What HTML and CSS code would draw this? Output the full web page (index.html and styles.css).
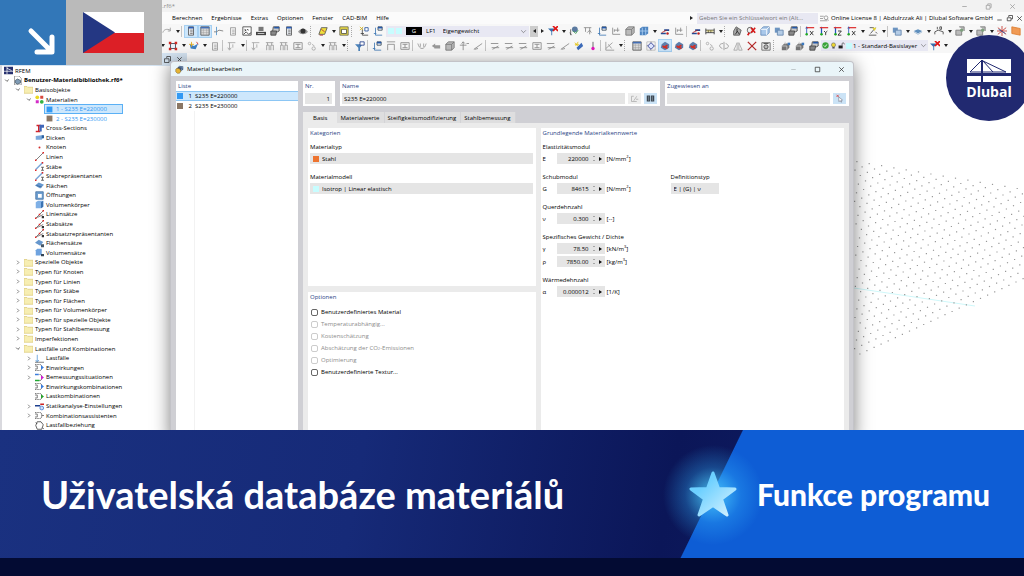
FILE: index.html
```html
<!DOCTYPE html>
<html lang="cs">
<head>
  <meta charset="UTF-8">
  <title>Uživatelská databáze materiálů | Dlubal</title>
  <meta name="viewport" content="width=device-width, initial-scale=1.0">
  <link rel="stylesheet" href="styles.css">
</head>
<body>
  <main class="app" lang="de">
    <header class="titlebar">
      <span class="file-name">Benutzer-Materialbibliothek.rf6*</span>
      <span class="window-btns">
        <button aria-label="Minimieren"><svg viewBox="0 0 12 12"><path d="M3 6h6"/></svg></button>
        <button aria-label="Verkleinern"><svg viewBox="0 0 12 12"><path d="M3 4.5h5v5H3zM5 4V2.500h4.500v5H8.500"/></svg></button>
        <button aria-label="Schließen"><svg viewBox="0 0 12 12"><path d="M3 3l6 6M9 3l-6 6"/></svg></button>
      </span>
    </header>
    <nav class="menubar">
      <button>Berechnen</button>
      <button>Ergebnisse</button>
      <button>Extras</button>
      <button>Optionen</button>
      <button>Fenster</button>
      <button>CAD-BIM</button>
      <button>Hilfe</button>
      <div class="menu-right">
        <span class="tri"></span>
        <input class="search" type="text" aria-label="Suche" placeholder="Geben Sie ein Schlüsselwort ein (Alt...">
        <svg class="find" viewBox="0 0 12 12"><path d="M0 3h5M0 6h4M0 9h10"/><circle cx="8" cy="5" r="2.500"/><path d="M10 7l2 2"/></svg>
        <span class="license">Online License 8 | Abdulrzzak Ali | Dlubal Software GmbH</span>
        <span class="mdi"><svg viewBox="0 0 12 12"><path d="M3 8h6"/></svg><svg viewBox="0 0 12 12"><path d="M3 5h5v4H3zM5 4V2h5v4.500H8"/></svg><svg viewBox="0 0 12 12"><path d="M3 3l6 6M9 3l-6 6"/></svg></span>
      </div>
    </nav>
    <div class="toolbar" id="toolbar1"></div>
    <div class="toolbar" id="toolbar2"></div>

    <div class="workspace">
      <aside class="navigator">
        <div class="nav-head"><svg viewBox="0 0 12 12"><path d="M2 5h6v5H2zM5 4V2h5v6H9"/></svg><svg viewBox="0 0 12 12"><path d="M3 3l6 6M9 3l-6 6"/></svg></div>
        <ul class="tree" id="tree"></ul>
      </aside>
      <div class="canvas">
        <svg id="grid" viewBox="854 52 170 378"></svg>
      </div>
    </div>

    <section class="dialog" role="dialog" aria-labelledby="dialogTitle">
      <div class="dialog-title">
        <svg viewBox="0 0 12 12"><path d="M2 5l4-4 5 1v4l-4 3z" fill="#3d5274"/><path d="M5 2l5 1-2 5" fill="none" stroke="#7fa2c8"/><path d="M1 6c1-2 3-2 5-1l2 3-2 3H3L1 9z" fill="#e6b435" stroke="#6b551f" stroke-width=".6"/></svg>
        <h2 id="dialogTitle">Material bearbeiten</h2>
        <span class="window-btns">
          <button class="off" aria-label="Minimieren"><svg viewBox="0 0 12 12"><path d="M3 6h6"/></svg></button>
          <button aria-label="Maximieren"><svg viewBox="0 0 12 12"><path d="M3 3h6v6H3z"/></svg></button>
          <button aria-label="Schließen"><svg viewBox="0 0 12 12"><path d="M3 3l6 6M9 3l-6 6"/></svg></button>
        </span>
      </div>
      <div class="dialog-body">
        <div class="list panel">
          <h3>Liste</h3>
          <ul>
            <li class="selected"><i class="swatch blue"></i><b>1</b><span>S235 E=220000</span></li>
            <li><i class="swatch brown"></i><b>2</b><span>S235 E=230000</span></li>
          </ul>
          <div class="list-rest"></div>
        </div>
        <div class="detail">
          <div class="top-row">
            <div class="panel nr">
              <label for="nr">Nr.</label>
              <input id="nr" class="field right" type="text" value="1">
            </div>
            <div class="panel name">
              <label for="name">Name</label>
              <div class="line">
                <input id="name" class="field" type="text" value="S235 E=220000">
                <button class="icon-btn" aria-label="Bearbeiten"><svg viewBox="0 0 12 12"><path d="M5 3H2v7h7M5 9l4-6M8 7h3" stroke="#aaa" fill="none"/></svg></button>
                <button class="icon-btn on" aria-label="Bibliothek"><svg viewBox="0 0 12 12"><path d="M1 2h4.500v8H1zM6.500 2H11v8H6.500z" fill="#3c4650"/><path d="M3.500 3v6M8.500 3v6" stroke="#8494a2"/></svg></button>
              </div>
            </div>
            <div class="panel assigned">
              <label for="assigned">Zugewiesen an</label>
              <div class="line">
                <input id="assigned" class="field" type="text">
                <button class="icon-btn on" aria-label="Auswählen"><svg viewBox="0 0 12 12"><path d="M2 1l3 3M5 1L2 4" stroke="#d33"/><path d="M5 4l5 4-2 .500 1 2-1 .500-1-2-2 1z" fill="#fff" stroke="#667" stroke-width=".7"/></svg></button>
              </div>
            </div>
          </div>
          <div class="tabs">
            <button class="active">Basis</button>
            <button>Materialwerte</button>
            <button>Steifigkeitsmodifizierung</button>
            <button>Stahlbemessung</button>
          </div>
          <div class="tab-page">
            <div class="left-col">
              <div class="panel categories">
                <h3>Kategorien</h3>
                <div class="group">
                  <label for="type">Materialtyp</label>
                  <div class="select"><i class="swatch orange"></i><select id="type"><option>Stahl</option></select></div>
                </div>
                <div class="group">
                  <label for="model">Materialmodell</label>
                  <div class="select"><i class="swatch cyan"></i><select id="model"><option>Isotrop | Linear elastisch</option></select></div>
                </div>
              </div>
              <div class="panel options">
                <h3>Optionen</h3>
                <label><input type="checkbox">Benutzerdefiniertes Material</label>
                <label class="off"><input type="checkbox" disabled>Temperaturabhängig...</label>
                <label class="off"><input type="checkbox" disabled>Kostenschätzung</label>
                <label class="off"><input type="checkbox" disabled>Abschätzung der CO<small>2</small>-Emissionen</label>
                <label class="off"><input type="checkbox" disabled>Optimierung</label>
                <label><input type="checkbox">Benutzerdefinierte Textur...</label>
              </div>
            </div>
            <div class="panel values">
              <h3>Grundlegende Materialkennwerte</h3>
              <div class="group">
                <p>Elastizitätsmodul</p>
                <div class="value"><label for="e">E</label><input id="e" type="text" value="220000"><i class="spin"></i><i class="more"></i><span>[N/mm<sup>2</sup>]</span></div>
              </div>
              <div class="pair">
                <div class="group">
                  <p>Schubmodul</p>
                  <div class="value"><label for="g">G</label><input id="g" type="text" value="84615"><i class="spin"></i><i class="more"></i><span>[N/mm<sup>2</sup>]</span></div>
                </div>
                <div class="group">
                  <label for="def">Definitionstyp</label>
                  <div class="select def"><select id="def"><option>E | (G) | ν</option></select></div>
                </div>
              </div>
              <div class="group">
                <p>Querdehnzahl</p>
                <div class="value"><label for="nu">ν</label><input id="nu" type="text" value="0.300"><i class="spin"></i><i class="more"></i><span>[--]</span></div>
              </div>
              <div class="group">
                <p>Spezifisches Gewicht / Dichte</p>
                <div class="value"><label for="gamma">γ</label><input id="gamma" type="text" value="78.50"><i class="spin"></i><i class="more"></i><span>[kN/m<sup>3</sup>]</span></div>
                <div class="value"><label for="rho">ρ</label><input id="rho" type="text" value="7850.00"><i class="spin"></i><i class="more"></i><span>[kg/m<sup>3</sup>]</span></div>
              </div>
              <div class="group">
                <p>Wärmedehnzahl</p>
                <div class="value"><label for="alpha">α</label><input id="alpha" type="text" value="0.000012"><i class="spin"></i><i class="more"></i><span>[1/K]</span></div>
              </div>
            </div>
          </div>
        </div>
      </div>
    </section>

    <div class="lang-badge">
      <div class="arrow"><svg viewBox="0 0 66 66"><path d="M31 31l20 20M52 37v15H37" fill="none" stroke="#fff" stroke-width="5" stroke-linecap="round" stroke-linejoin="round"/></svg></div>
      <div class="flag"><svg viewBox="0 0 61 41"><path fill="#fff" d="M0 0h61v21H0z"/><path fill="#dc1f26" d="M0 21h61v20H0z"/><path fill="#243783" d="M0 0l32 20.500L0 41z"/></svg></div>
    </div>
    <div class="brand">
      <svg viewBox="0 0 44 23"><path fill="#fff" d="M0 0h44v14H0zM0 17h44v6H0z"/><path d="M3 13L14 2M16 2l10 11M16 2l23 11M3 13h36" fill="none" stroke="#212970" stroke-width="1"/><path d="M15 1v22" stroke="#212970" stroke-width="2"/></svg>
      <span>Dlubal</span>
    </div>
  </main>

  <footer class="banner">
    <h1>Uživatelská databáze materiálů</h1>
    <div class="feature">
      <svg class="star" viewBox="0 0 48 46">
        <defs><linearGradient id="starFill" x1="0" y1="0" x2="1" y2="1"><stop offset=".3" stop-color="#6dd0ff"/><stop offset="1" stop-color="#d9f3ff"/></linearGradient></defs>
        <path d="M24 2l5.500 15.500 16.500.500-13.500 10L38 44l-14-9.500L10 44l5.500-16L2 18l16.500-.500z" fill="url(#starFill)" stroke="url(#starFill)" stroke-width="3" stroke-linejoin="round"/>
      </svg>
      <strong>Funkce programu</strong>
    </div>
  </footer>
  <script src="script.js"></script>
</body>
</html>
```

FILE: styles.css
```css
* { box-sizing: border-box; }
body {
  margin: 0; height: 100vh; display: flex; flex-direction: column;
  font-family: 'Open Sans', 'Noto Sans', sans-serif; font-size: 6px; line-height: 10px; color: #000;
  background: #fff; overflow: hidden;
}
button, input, select { font: inherit; color: inherit; border: 0; padding: 0; margin: 0; background: none; border-radius: 0; }
h1, h2, h3, p, ul { margin: 0; padding: 0; font-weight: normal; font-size: inherit; list-style: none; }
svg { display: block; }
i { font-style: normal; flex: none; }

.app { flex: 1; min-height: 0; display: flex; flex-direction: column; position: relative; overflow: hidden; }

/* window header */
.titlebar { flex: none; height: 12px; padding-left: 84px; background: #f2f2f2; display: flex; justify-content: space-between; color: #8a8a8a; }
.file-name { line-height: 12px; }
.window-btns { display: flex; }
.window-btns button { width: 24px; display: grid; place-items: center; }
.window-btns svg, .mdi svg, .nav-head svg { width: 9px; height: 9px; fill: none; stroke: #333; }
.titlebar .window-btns svg { stroke: #999; }
.window-btns .off { opacity: .3; }

.menubar { flex: none; height: 12px; padding-left: 172px; background: #fbfbfb; display: flex; align-items: center; gap: 9px; white-space: nowrap; }
.menu-right { margin-left: auto; display: flex; align-items: center; gap: 2px; }
.search { width: 121px; height: 11px; background: #e8e8f2; padding-left: 2px; margin-left: 2px; }
.search::placeholder { color: #777; }
.find { width: 9px; height: 9px; fill: none; stroke: #888; }
.mdi { display: flex; gap: 1px; }
.tri { width: 0; height: 0; border: 2px solid transparent; border-left: 3px solid #222; border-right: 0; }

/* toolbars */
.toolbar { flex: none; height: 14px; padding-left: 160px; background: #f7f7f7; display: flex; align-items: center; white-space: nowrap; overflow: hidden; }
#toolbar2 { height: 15px; padding-left: 159px; }
.tool { flex: none; width: 14px; height: 13px; display: grid; place-items: center; }
.tool svg { width: 10px; height: 10px; }
.tool.on { background: #cce6fb; border: 1px solid #a6d0f2; }
.caret { flex: none; width: 7px; display: grid; place-items: center; }
.caret::after { content: ''; border: 2px solid transparent; border-top: 3px solid #222; border-bottom: 0; }
.sep { flex: none; width: 3px; height: 11px; border-left: 1px solid #c4c4c4; }
.dots { flex: none; width: 6px; height: 11px; border-left: 1px dotted #aaa; }
.combo { flex: none; height: 11px; background: #e8e8f3; display: flex; align-items: center; gap: 2px; padding: 0 2px; }
.combo select { flex: 1; min-width: 0; appearance: none; }
.combo svg { flex: none; width: 7px; height: 7px; }
.load { width: 143px; margin: 0 1px; }
.load .tag { width: 16px; height: 8px; margin: 0 2px; background: #000; color: #fff; text-align: center; line-height: 8px; }
.load select { margin-left: 5px; }
.layer { width: 107px; gap: 1px; padding: 0 1px; }
.pager { flex: none; width: 8px; height: 11px; display: grid; place-items: center; }
.pager.back { background: #ccc; }
.pager.back .tri { transform: scaleX(-1); }

/* navigator */
.workspace { flex: 1; min-height: 0; display: flex; }
.navigator { width: 187px; display: flex; flex-direction: column; border-left: 2px solid #d9d9de; }
.nav-head { flex: none; height: 13px; background: #d6e5f3; display: flex; justify-content: flex-end; align-items: center; gap: 3px; padding-right: 3px; }
.tree { flex: 1; min-height: 0; display: flex; flex-direction: column; }
.tree li { flex: 1; min-height: 0; display: flex; align-items: center; gap: 2px; white-space: nowrap; }
.tree li svg { flex: none; width: 9px; height: 9px; }
.tree li .chevron { fill: none; stroke-width: 2; }
.tree .level0 { padding-left: 2px; }
.tree .level1 { font-weight: bold; }
.tree .level2 { padding-left: 11px; }
.tree .level3 { padding-left: 22px; }
.tree .level4 { padding-left: 42px; color: #2f97f3; }
.tree .level4 span { display: flex; align-items: center; gap: 3px; height: 10px; width: 79px; padding-left: 1px; border: 1px solid transparent; }
.tree .level4.selected span { background: #cde7fc; border-color: #5ab0f5; }
.tree .level4 svg { width: 7px; height: 7px; }
.canvas { flex: 1; min-width: 0; display: flex; justify-content: flex-end; }
.canvas svg { height: 378px; }

/* dialog */
.dialog {
  position: absolute; top: 61px; left: 170px; right: 170px; bottom: -10px;
  display: flex; flex-direction: column; background: #cfcfd4; border: 1px solid #c3c3c8; border-bottom: 0;
  border-radius: 4px 4px 0 0; box-shadow: 0 3px 18px rgba(0, 0, 0, .5);
}
.dialog-title { flex: none; height: 14px; padding: 0 0 0 4px; background: #eaf5f9; border-radius: 3px 3px 0 0; display: flex; align-items: center; gap: 3px; }
.dialog-title > svg { width: 9px; height: 9px; }
.dialog-title .window-btns { margin-left: auto; }
.dialog-body { flex: 1; min-height: 0; display: flex; gap: 5px; padding: 5px 4px 0 5px; }
.panel { background: #fff; padding: 0 3px 2px 2px; }
.panel h3, .top-row label { color: #2b4585; }
.top-row label { display: block; margin-bottom: 2px; }
.swatch { display: block; width: 6px; height: 6px; }
.blue { background: #3399f3; }
.brown { background: #8b7765; }
.orange { background: #ed7430; }
.cyan { background: #c8fdff; }

.list { width: 122px; padding: 0; display: flex; flex-direction: column; }
.list h3 { padding-left: 2px; }
.list li { height: 10px; display: flex; align-items: center; padding-left: 1px; border: 1px solid transparent; border-width: 1px 0; }
.list li b { width: 9px; text-align: right; font-weight: normal; margin-right: 3px; }
.list .selected { background: #cde7fc; border-color: #8cc6f4; }
.list-rest { flex: 1; width: 19px; border-right: 1px solid #f2f2f2; }

.detail { flex: 1; min-width: 0; display: flex; flex-direction: column; }
.top-row { display: flex; gap: 5px; margin-bottom: 6px; }
.nr { width: 32px; }
.name { flex: 1; }
.assigned { width: 184px; }
.line { display: flex; gap: 3px; }
.field { display: block; height: 11px; width: 100%; min-width: 0; background: #e5e5e5; padding: 0 2px; }
.right { text-align: right; }
.icon-btn { flex: none; width: 13px; height: 11px; background: #eee; display: grid; place-items: center; }
.icon-btn svg { width: 9px; height: 9px; }
.icon-btn.on { background: #cbe3f6; }

.tabs { display: flex; }
.tabs button { height: 11px; padding: 0 4px 0 3px; background: #dededf; border-right: 1px solid #d3d3d6; }
.tabs .active { padding: 0 10px; background: #ebebeb; border: 0; }
.tab-page { flex: 1; min-height: 0; background: #ebebeb; padding: 5px 5px 0; display: grid; grid-template-columns: 3fr 4fr; gap: 5px; }
.left-col { display: flex; flex-direction: column; gap: 6px; }
.tab-page h3 { margin-bottom: 4px; }
.categories { height: 158px; }
.options { flex: 1; }
.group { margin-bottom: 8px; }
.group > label, .group > p { display: block; margin-bottom: 1px; }
.select { height: 11px; background: #e5e5e5; display: flex; align-items: center; gap: 3px; padding-left: 3px; }
.select select { flex: 1; appearance: none; }
.select.def { width: 48px; }
.pair { display: grid; grid-template-columns: 128px 1fr; }
.value { display: flex; align-items: center; height: 11px; margin-bottom: 2px; }
.value:last-child { margin-bottom: 0; }
.value label { width: 14px; }
.value input { width: 32px; height: 11px; text-align: right; background: #e5e5e5; }
.value .spin { width: 10px; height: 11px; background: #e5e5e5; display: grid; place-items: center; align-content: center; gap: 3px; }
.value .spin::before { content: ''; border: 1px solid transparent; border-bottom-color: #666; border-top: 0; }
.value .spin::after { content: ''; border: 1px solid transparent; border-top-color: #666; border-bottom: 0; }
.value .more { width: 6px; height: 11px; margin-right: 2px; background: #e5e5e5; display: grid; align-items: center; }
.value .more::before { content: ''; width: 0; border: 2px solid transparent; border-left: 3px solid #111; border-right: 0; }
.value sup { font-size: 4px; line-height: 0; }
.options label { display: flex; align-items: center; height: 12px; }
.options small { font-size: 4px; align-self: flex-end; }
.options input { appearance: none; width: 7px; height: 7px; margin: 0 3px 0 1px; border: 1px solid #666; border-radius: 2px; }
.options .off { color: #8c8c8c; }
.options .off input { border-color: #ccc; }

/* overlays */
.lang-badge { position: absolute; top: 0; left: 0; display: flex; height: 65px; }
.arrow { width: 66px; background: #3277b8; }
.flag { width: 96px; background: #bababa; padding: 12px 17px; }
.flag svg { width: 61px; height: 41px; }
.brand {
  position: absolute; top: 35px; right: -8px; width: 86px; height: 86px; border-radius: 50%;
  background: #212970; color: #fff; display: flex; flex-direction: column; align-items: center;
  padding-top: 24px; font-size: 14px; line-height: 20px; font-weight: bold;
}
.brand svg { width: 44px; height: 23px; }

/* banner */
.banner {
  flex: none; height: 146px; border-bottom: 18px solid #030b33; display: flex; align-items: stretch; justify-content: space-between;
  background:
    radial-gradient(circle at calc(100% - 311px) 65px, rgba(70, 200, 255, .65) 12px, rgba(50, 180, 255, .3) 28px, rgba(50, 180, 255, 0) 50px),
    linear-gradient(116deg, transparent 57px, #0e5dd5 58px) right / 345px 100% no-repeat,
    linear-gradient(100deg, #1a3180 0%, #162a78 35%, #0b1658 65%, #14236b 100%);
  font-family: Lato, sans-serif; color: #fff; white-space: nowrap;
}
.banner h1 { font-size: 38px; line-height: 48px; font-weight: bold; padding-left: 41px; align-self: center; }
.feature { width: 345px; display: flex; align-items: center; gap: 20px; padding-left: 10px; }
.star { width: 48px; height: 46px; }
.feature strong { font-size: 30px; line-height: 36px; font-weight: 900; }
```

FILE: script.js
```javascript
// icon shapes, drawn on a 12x12 grid
const icons = {
  redo: '<path d="M1 8c1-4 5-5 9-3M10 2v4H7" fill="none" stroke="#999"/>',
  window: '<path d="M3 1h6v10H3z" fill="#e4e8ee" stroke="#555"/><path d="M3 2h6" stroke="#2b5fb8" stroke-width="2"/><path d="M5 5h3M5 7h3M5 9h3" stroke="#777"/>',
  table: '<path d="M1 1h10v10H1z" fill="#ddd" stroke="#555"/><path d="M1 2h10" stroke="#446fb5" stroke-width="2"/><path d="M1 5h10M1 8h10M4 3v8M8 3v8" stroke="#999" stroke-width=".6"/>',
  axis: '<path d="M3 1v10" stroke="#4f93cc"/><path d="M0 7h3l3-2 5 1" fill="none" stroke="#777"/>',
  sheet: '<path d="M3 2h6v9H3z" fill="#eee" stroke="#999"/><path d="M5 5h3M5 7h3M5 9h3" stroke="#aaa"/>',
  console: '<path d="M1 1h10v10H1z" fill="#fff" stroke="#444"/><path d="M3 4l2 1-2 1M6 4l2 1M2 10l3-3 3 3 3-2" stroke="#333" fill="none"/>',
  calc: '<path d="M3 1h6v5H3z" fill="#777"/><path d="M0 7h12v4H0z" fill="#444"/><path d="M2 9h8" stroke="#ddd"/>',
  copy: '<path d="M4 1h7v5l-2 1H3z" fill="#c9c9c9" stroke="#444"/><path d="M1 6h7l-1 5H1z" fill="#888" stroke="#444"/><path d="M5 2h6" stroke="#2458a8" stroke-width="2"/>',
  eye: '<path d="M0 7c3-5 9-5 12 0-3 4-9 4-12 0z" fill="#999"/><circle cx="6" cy="6" r="3" fill="#333"/>',
  yellow: '<path d="M4 2h7L8 10H1z" fill="#f0e03b" stroke="#555"/><path d="M2 11h4M4 4l4 3" stroke="#b33"/>',
  ybox: '<path d="M1 1h10v10H1z" fill="#eadb43" stroke="#665"/><path d="M3 4h6v5H3z" fill="#fff" stroke="#554"/>',
  load: '<path d="M3 2v9h8M1 9h3" fill="none" stroke="#4179b5"/><path d="M6 1h5v4H6z" fill="#fff" stroke="#345"/><path d="M6 2h5" stroke="#2458a8" stroke-width="2"/>',
  loadNew: '<path d="M4 3v8h7M2 9h4" fill="none" stroke="#444"/><path d="M7 2h4v4H7z" fill="#fff" stroke="#27539b"/><path d="M1 1l4 4M5 1L1 5" stroke="#d6b51c"/>',
  filterX: '<path d="M0 3h8L5 7v4H4V7z" fill="#356fae"/><path d="M6 0l6 6M12 0L6 6" stroke="#e01515" stroke-width="2"/>',
  filter: '<path d="M0 4h9L6 8v4H4V8z" fill="#4c83bb"/><path d="M6 1h5v4H6z" fill="#fff" stroke="#24408a"/>',
  globe: '<circle cx="7" cy="4" r="3.500" fill="#5b7aa0"/><path d="M2 4v7M1 8l2 3" stroke="#555"/><path d="M5 6l3 3 3-4" stroke="#3d9c50" fill="none"/>',
  support: '<path d="M1 2h9M3 2v5M8 2v8M5 8l3-3 2 3" fill="none" stroke="#888"/>',
  frame: '<path d="M2 11V4h8v7M1 1h10" fill="none" stroke="#8c8c8c"/>',
  dim: '<path d="M2 2v8h9M4 4v3M8 2v5M4 5h6" fill="none" stroke="#888"/>',
  cube: '<path d="M1 4l3-3h7v7l-3 3H1z" fill="#bbb" stroke="#777"/><path d="M1 4h7v7M8 4l3-3" fill="none" stroke="#777"/>',
  blueCube: '<path d="M1 4l3-3h7v7l-3 3H1z" fill="#a9c8ea" stroke="#6489b8"/><path d="M1 4h7v7M8 4l3-3" fill="none" stroke="#fff"/>',
  mesh: '<path d="M1 3l3-2h7v8l-3 2H1z" fill="#4d84c0"/><path d="M1 6h10M4 2v9M8 2v9" stroke="#a9cdf0"/>',
  beam: '<path d="M1 9h6M5 5h6" stroke="#244a92" stroke-width="2"/><path d="M2 8l6-3" stroke="#b22"/><circle cx="9" cy="9" r="1.500" fill="#b22"/>',
  ruler: '<path d="M1 3v7M11 3v7M1 5h10M1 8h10M4 5v3M7 5v3" stroke="#333" fill="none"/><path d="M2 6h8" stroke="#c9bb42"/>',
  walk: '<path d="M5 1l6 4-2 6H2V6z" fill="#aaa" stroke="#555"/><path d="M6 3v4l-2 3M6 6l3 4" stroke="#222" fill="none"/>',
  searchX: '<circle cx="5" cy="5" r="3.500" fill="#eee" stroke="#555"/><path d="M2 11l2-3M6 2l5 6M11 2L6 8" stroke="#d71a1a" stroke-width="2"/>',
  axX: '<path d="M2 1v10M1 3l1-2 1 2" stroke="#2355bb" fill="none"/><path d="M2 2h9" stroke="#d33" stroke-width="1.500"/><path d="M6 6l4 5M10 6l-4 5" stroke="#222"/><circle cx="2" cy="10" r="1.500" fill="#2a2"/>',
  axY: '<path d="M3 1v10" stroke="#2355bb" stroke-width="1.500"/><path d="M1 2h10" stroke="#d33" stroke-width="1.500"/><path d="M6 6l2 2 2-2M8 8v3" stroke="#222" fill="none"/><circle cx="3" cy="10" r="1.500" fill="#2a2"/>',
  axZ: '<path d="M3 1v10" stroke="#2355bb" stroke-width="1.500"/><path d="M1 2h9" stroke="#d33" stroke-width="1.500"/><path d="M6 6h4l-4 5h4" stroke="#222" fill="none"/><circle cx="3" cy="10" r="1.500" fill="#2a2"/>',
  pen: '<path d="M1 11h9M3 9l6-7M2 2h5M9 7l2 2" stroke="#444" fill="none"/><path d="M5 2h5l-2 4z" fill="#e3d232"/>',
  stack: '<path d="M1 2h6v6H1z" fill="#6d95c2"/><path d="M4 5h7v6H4z" fill="#b4cce6" stroke="#6183aa"/>',
  disc: '<path d="M1 6l5-2 5 2-5 3z" fill="#5f8fbd"/><path d="M1 7l5 3 5-3" fill="none" stroke="#9db8d2"/>',
  ten: '<path d="M1 10V7l4-2 6 2v3M4 1v3M7 1h2v3H7z" stroke="#444" fill="none"/>',
  greyBox: '<path d="M1 5h7v6H1zM5 1h6v5" fill="#bbb" stroke="#777"/><circle cx="8" cy="5" r="2" fill="#7d9f7d"/>',
  redMesh: '<path d="M1 2l10 8M11 2L1 10M0 6h12M6 0v12" stroke="#c5352d"/><path d="M2 4l8 5" stroke="#2458a8"/>',
  orange: '<path d="M1 1l10 2v8L1 9z" fill="#f09a54" stroke="#dc7d30"/>',
  redSquare: '<path d="M3 3h6v6H3z" fill="#eaf2fb" stroke="#345"/><path d="M1 1h3v3H1zM8 1h3v3H8zM1 8h3v3H1zM8 8h3v3H8z" fill="#cf2a25"/>',
  star: '<path d="M1 4l5 2 5-3-3 7-6-1z" fill="#3d7fc4"/><path d="M3 1v6M0 4h6" stroke="#e0a818"/><path d="M9 1l2 3" stroke="#c33"/>',
  greyLoad: '<path d="M1 2h9M3 2v8M1 8l2 3 2-3M7 4v4" stroke="#a5a5a5" fill="none"/>',
  greyBeam: '<path d="M2 11V5h3v6M7 11V5h3v6M1 2h9M3 2v3M8 2v3" stroke="#999" fill="none"/>',
  section: '<path d="M1 2h10v8H1zM3 4h6M3 8h6M6 4v4" stroke="#888" fill="none"/>',
  arc: '<path d="M1 3c2 8 8 8 10 0M4 3v4M8 3v4" stroke="#999" fill="none"/>',
  plate: '<path d="M1 6l4-3v2h6v4H4V8z" fill="#999"/>',
  plus: '<path d="M5 1v10M1 5h8M3 3l2-2 2 2M9 3h3" stroke="#888" fill="none"/>',
  slope: '<path d="M1 10l10-7M2 10l4-1" stroke="#888" fill="none"/>',
  lines: '<path d="M1 3h9M2 8h9M3 10l7-4" stroke="#888" fill="none"/>',
  spin: '<path d="M3 8L9 2l2 4-6 5z" fill="#3e6cba"/><path d="M1 2l4 4M5 1L2 6M1 4h5" stroke="#e4c414"/>',
  pin: '<path d="M6 1v7" stroke="#555"/><circle cx="6" cy="9" r="2" fill="#e316bc"/>',
  angle: '<path d="M1 1v10h10M1 9l8-7M4 4l4 5" stroke="#999" fill="none"/>',
  snap: '<path d="M1 1h10v10H1zM6 0v12M0 6h12" stroke="#bbb" fill="none"/><path d="M6 2l4 4-4 4-4-4z" fill="#dde5ff" stroke="#26348e"/>',
  redCube: '<path d="M2 4l4-3 5 3v4l-5 3-5-3z" fill="#5c80ae"/><path d="M3 6l6 3M9 5L4 8" stroke="#d33028" stroke-width="2"/>',
  percent: '<circle cx="3" cy="3" r="1.500" stroke="#aaa" fill="none"/><circle cx="8" cy="9" r="2" stroke="#aaa" fill="none"/><path d="M6 4l3 2" stroke="#aaa"/>',
  rotate: '<path d="M4 9C-1 7 0 3 5 3M8 3c5 2 4 6-1 6M6 1v10" stroke="#999" fill="none"/>',
  mirror: '<path d="M5 2v9H1zM7 2v9h4z" fill="none" stroke="#aaa"/>',
  cross: '<path d="M1 1l10 10M11 1L1 11" stroke="#b52a2a" stroke-width="1.500"/>',
  cam: '<path d="M1 2h10v9H1z" fill="#eee" stroke="#666"/><circle cx="6" cy="7" r="2.500" fill="#bbb" stroke="#444"/><path d="M3 3h6" stroke="#444"/>',
  layers: '<path d="M1 6l3-3h6v5l-3 3H1z" fill="#777"/><path d="M1 6h6v5M5 1v3" stroke="#ccc" fill="none"/><path d="M8 2h3v3H8z" fill="#3d7ac0"/>',
  ok: '<circle cx="6" cy="6" r="5.500" fill="#3ba53b"/><path d="M3 6l2 2 4-4" stroke="#fff" stroke-width="1.500" fill="none"/>',
  bulb: '<circle cx="6" cy="5" r="3.500" fill="#f0d832" stroke="#665"/><path d="M4 10h4" stroke="#333" stroke-width="2"/>',
  lock: '<path d="M1 6h7v5H1z" fill="#222"/><path d="M7 6V3c0-2 4-2 4 1" stroke="#222" fill="none"/>',
  down: '<path d="M2 4l4 4 4-4" fill="none" stroke="#555"/>',
  right: '<path d="M4 2l4 4-4 4" fill="none" stroke="#777"/>',
  // tree
  rfem: '<path d="M0 1h12v10H0z" fill="#26306f"/><path d="M4 1v10M0 7h12M4 3l6 3" stroke="#fff"/>',
  file: '<path d="M2 0h6l3 3v9H2z" fill="#fff" stroke="#888"/><path d="M3 6l3-2 4 2v3l-4 2-3-2z" fill="#7f9bb4" stroke="#456"/>',
  folder: '<path d="M0 2h4l1 1h7v8H0z" fill="#f7eeb2" stroke="#dccb7c"/>',
  materials: '<circle cx="3" cy="3" r="2.500" fill="#ead820"/><path d="M7 1h4v4H7z" fill="#d7483d"/><path d="M1 7h4v4H1z" fill="#d32bc7"/><circle cx="9" cy="9" r="2.500" fill="#35b345"/>',
  matBlue: '<path d="M1 1h10v10H1z" fill="#3399f3"/>',
  matBrown: '<path d="M1 1h10v10H1z" fill="#8b7765"/>',
  cross2: '<path d="M2 2h6M1 10h6M5 2v8" stroke="#d2232a" stroke-width="2"/><path d="M6 1h6v4h-3v5H6z" fill="#3f66b8"/>',
  thick: '<path d="M1 4l8-1 3 1-3 5H1z" fill="#7aa8dc"/><path d="M9 3h3v4H9z" fill="#2f62a0"/>',
  node: '<circle cx="6" cy="6" r="1.300" fill="#cf2a2a"/>',
  line: '<path d="M1 11L11 1" stroke="#555"/><path d="M0 10h2v2H0zM10 0h2v2h-2z" fill="#d22"/>',
  member: '<path d="M1 10L10 1" stroke="#79a5d8" stroke-width="2"/><path d="M0 10h2v2H0zM9 0h2v2H9z" fill="#d22"/><path d="M8 7h4M8 11h4M10 7v4" stroke="#444"/>',
  surface: '<path d="M0 6l5-4 7 3-5 5z" fill="#6697cd"/><path d="M2 6l7 2" stroke="#345f94"/>',
  opening: '<path d="M1 1h10v10H1z" fill="#6f9fd0" stroke="#3f6d9f"/><path d="M4 4h5v5H4z" fill="#fff"/>',
  solid: '<path d="M1 3l3-2h7v8l-3 2H1z" fill="#7fb0e6"/><path d="M8 3l3-2v8l-3 2z" fill="#3b73b2"/>',
  lineSet: '<path d="M1 11L11 1M3 10l8-4" stroke="#555"/><path d="M0 10h2v2H0zM10 0h2v2h-2zM5 5h2v2H5z" fill="#d22"/><path d="M9 8h3v3H9z" fill="#333"/>',
  surfaceSet: '<path d="M0 5l5-4 6 3-4 5z" fill="#6697cd"/><path d="M8 7h4v4H8z" fill="#456"/>',
  solidSet: '<path d="M1 3l2-2h6v7l-2 2H1z" fill="#6fa3df"/><path d="M8 8h4v3H8z" fill="#345"/>',
  loadCase: '<path d="M3 1v9M1 8l2 3 2-3" stroke="#4b91d6" fill="none"/><path d="M0 11h12" stroke="#555"/>',
  action: '<path d="M0 2h5M0 10h5" stroke="#555" stroke-dasharray="2 1"/><path d="M0 4h3v4H0M6 2c3 0 3 2 3 4s0 4-3 4" stroke="#555" fill="none"/><path d="M8 3l4 3-4 3z" fill="#3b7ddd"/>',
  situation: '<path d="M0 2h5" stroke="#3b7ddd" stroke-width="2"/><path d="M6 2c3 0 3 2 3 4s0 4-3 4" stroke="#444" fill="none"/><path d="M0 9h6v2H0z" fill="#2a3"/><path d="M8 3l4 3-4 3z" fill="#d21bd2"/>',
  combo: '<path d="M0 2h5M0 10h5" stroke="#555" stroke-dasharray="2 1"/><path d="M0 4h3v4H0M6 2c3 0 3 2 3 4s0 4-3 4" stroke="#555" fill="none"/><path d="M8 3l4 3-4 3z" fill="#26a32b"/>',
  settings: '<path d="M0 5h7" stroke="#1c3f8f" stroke-width="2"/><path d="M7 3h5" stroke="#c22" stroke-width="2"/><circle cx="9" cy="8" r="2.500" fill="#cfe0f8" stroke="#3b76cf"/>',
  wizard: '<path d="M0 2h5M0 10h5" stroke="#555" stroke-dasharray="2 1"/><path d="M0 4h3v4H0M6 2c3 0 3 2 3 4s0 4-3 4M9 6h3" stroke="#555" fill="none"/>',
  relation: '<path d="M3 1h5l3 4-2 6H3L1 6zM1 2l2 2M10 9l2 2" stroke="#333" fill="none"/>'
};

function svg(name) {
  return `<svg viewBox="0 0 12 12">${icons[name]}</svg>`;
}

const loadCombo = `<div class="combo load"><i class="swatch cyan"></i><i class="swatch cyan"></i><span class="tag">G</span><span>LF1</span>
  <select aria-label="Lastfall"><option>Eigengewicht</option></select>${svg('down')}</div>
  <button class="pager back" aria-label="Zurück"><i class="tri"></i></button><button class="pager" aria-label="Weiter"><i class="tri"></i></button>`;
const layerCombo = `<div class="combo layer">${svg('ok')}${svg('bulb')}${svg('lock')}<i class="swatch cyan"></i>
  <select aria-label="Layer"><option>1 - Standard-Basislayer</option></select>${svg('down')}</div>`;

// v = drop-down arrow, | = separator, : = group handle, * = pressed
const bars = {
  toolbar1: 'redo v | window* table* axis sheet console calc copy window eye : yellow v ybox : loadNew load LOAD filterX v globe support load dim cube mesh v beam dim | beam ruler v : walk searchX blueCube stack copy | axX axY axZ axX v pen v | stack v disc v ten v greyBox v greyBox v redMesh orange',
  toolbar2: 'v redSquare v star v sheet | greyLoad v | greyLoad greyBeam greyBeam section percent v greyBeam v : filter | load frame section | arc plate cube plus slope | lines lines lines section lines slope spin pin | angle v : table snap redCube* redCube redCube | percent rotate mirror cross cam : layers layers copy LAYER filterX v'
};
for (let id in bars) {
  document.getElementById(id).innerHTML = bars[id].split(' ').map(t => {
    if (t === 'v') return '<span class="caret"></span>';
    if (t === '|') return '<span class="sep"></span>';
    if (t === ':') return '<span class="dots"></span>';
    if (t === 'LOAD') return loadCombo;
    if (t === 'LAYER') return layerCombo;
    let name = t.replace('*', '');
    return `<button class="tool${t.endsWith('*') ? ' on' : ''}" aria-label="${name}">${svg(name)}</button>`;
  }).join('');
}

// [level, chevron or selection, icon, text]
const nodes = [
  [0, '', 'rfem', 'RFEM'],
  [1, 'down', 'file', 'Benutzer-Materialbibliothek.rf6*'],
  [2, 'down', 'folder', 'Basisobjekte'],
  [3, 'down', 'materials', 'Materialien'],
  [4, 'sel', 'matBlue', '1 - S235 E=220000'],
  [4, '', 'matBrown', '2 - S235 E=230000'],
  [3, '', 'cross2', 'Cross-Sections'],
  [3, '', 'thick', 'Dicken'],
  [3, '', 'node', 'Knoten'],
  [3, '', 'line', 'Linien'],
  [3, '', 'member', 'Stäbe'],
  [3, '', 'member', 'Stabrepräsentanten'],
  [3, '', 'surface', 'Flächen'],
  [3, '', 'opening', 'Öffnungen'],
  [3, '', 'solid', 'Volumenkörper'],
  [3, '', 'lineSet', 'Liniensätze'],
  [3, '', 'lineSet', 'Stabsätze'],
  [3, '', 'lineSet', 'Stabsatzrepräsentanten'],
  [3, '', 'surfaceSet', 'Flächensätze'],
  [3, '', 'solidSet', 'Volumensätze'],
  [2, 'right', 'folder', 'Spezielle Objekte'],
  [2, 'right', 'folder', 'Typen für Knoten'],
  [2, 'right', 'folder', 'Typen für Linien'],
  [2, 'right', 'folder', 'Typen für Stäbe'],
  [2, 'right', 'folder', 'Typen für Flächen'],
  [2, 'right', 'folder', 'Typen für Volumenkörper'],
  [2, 'right', 'folder', 'Typen für spezielle Objekte'],
  [2, 'right', 'folder', 'Typen für Stahlbemessung'],
  [2, 'right', 'folder', 'Imperfektionen'],
  [2, 'down', 'folder', 'Lastfälle und Kombinationen'],
  [3, 'right', 'loadCase', 'Lastfälle'],
  [3, 'right', 'action', 'Einwirkungen'],
  [3, 'right', 'situation', 'Bemessungssituationen'],
  [3, '', 'action', 'Einwirkungskombinationen'],
  [3, '', 'combo', 'Lastkombinationen'],
  [3, 'right', 'settings', 'Statikanalyse-Einstellungen'],
  [3, 'right', 'wizard', 'Kombinationsassistenten'],
  [3, '', 'relation', 'Lastfallbeziehung']
];
document.getElementById('tree').innerHTML = nodes.map(([level, state, icon, text]) => {
  if (level === 4) return `<li class="level4 ${state ? 'selected' : ''}"><span>${svg(icon)}${text}</span></li>`;
  let chevron = level === 0 ? '' : `<svg class="chevron" viewBox="-5 -4 20 20">${icons[state] || ''}</svg>`;
  return `<li class="level${level}">${chevron}${svg(icon)}${text}</li>`;
}).join('');

// work plane grid points
let dots = '<path d="M854 287l121 18" stroke="#cff8fa"/>';
for (let i = 0; i < 26; i++) {
  for (let j = 0; j < 52; j++) {
    let x = 856.3 + i * 12.33 - j * 7.1;
    let y = 160 + i * 2.07 + j * 3.27;
    if (x < 854 || x > 1024) continue;
    dots += `<path d="M${x.toFixed(1)} ${y.toFixed(1)}h1.200v1.200h-1.200z" fill="#9a9a9a"/>`;
  }
}
document.getElementById('grid').innerHTML = dots;
```
